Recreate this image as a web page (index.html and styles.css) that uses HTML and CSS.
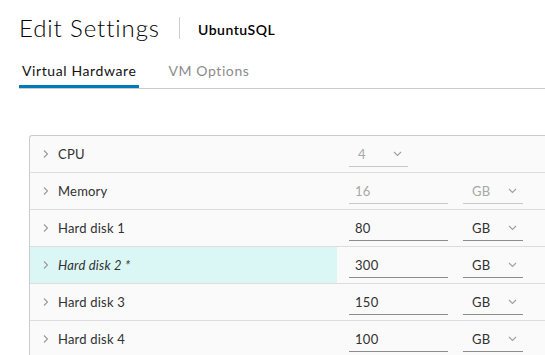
FILE: index.html
```html
<!DOCTYPE html>
<html lang="en">
<head>
    <meta charset="UTF-8" />
    <title>Edit Settings | UbuntuSQL</title>
    <link rel="stylesheet" href="styles.css">
</head>
<body>

    <header class="dialog-header">
        <h1>Edit Settings</h1>
        <span class="title-divider"></span>
        <span class="vm-name">UbuntuSQL</span>
    </header>

    <nav class="tabs">
        <a href="#" class="tab active">Virtual Hardware</a>
        <a href="#" class="tab">VM Options</a>
    </nav>

    <div class="hw-table">
        <div class="hw-row">
            <div class="hw-label">
                <svg class="caret" width="6" height="10" viewBox="0 0 6 10"><polyline points="1,1.5 4.5,5 1,8.5" /></svg>
                CPU
            </div>
            <div class="hw-value">
                <div class="field select short disabled">4
                    <svg class="select-caret" width="9" height="6" viewBox="0 0 9 6"><polyline points="1,1 4.5,4.5 8,1" /></svg>
                </div>
            </div>
        </div>

        <div class="hw-row">
            <div class="hw-label">
                <svg class="caret" width="6" height="10" viewBox="0 0 6 10"><polyline points="1,1.5 4.5,5 1,8.5" /></svg>
                Memory
            </div>
            <div class="hw-value">
                <div class="field input disabled">16</div>
                <div class="field select disabled">GB
                    <svg class="select-caret" width="9" height="6" viewBox="0 0 9 6"><polyline points="1,1 4.5,4.5 8,1" /></svg>
                </div>
            </div>
        </div>

        <div class="hw-row">
            <div class="hw-label">
                <svg class="caret" width="6" height="10" viewBox="0 0 6 10"><polyline points="1,1.5 4.5,5 1,8.5" /></svg>
                Hard disk 1
            </div>
            <div class="hw-value">
                <div class="field input">80</div>
                <div class="field select">GB
                    <svg class="select-caret" width="9" height="6" viewBox="0 0 9 6"><polyline points="1,1 4.5,4.5 8,1" /></svg>
                </div>
            </div>
        </div>

        <div class="hw-row modified">
            <div class="hw-label">
                <svg class="caret" width="6" height="10" viewBox="0 0 6 10"><polyline points="1,1.5 4.5,5 1,8.5" /></svg>
                <em>Hard disk 2 *</em>
            </div>
            <div class="hw-value">
                <div class="field input">300</div>
                <div class="field select">GB
                    <svg class="select-caret" width="9" height="6" viewBox="0 0 9 6"><polyline points="1,1 4.5,4.5 8,1" /></svg>
                </div>
            </div>
        </div>

        <div class="hw-row">
            <div class="hw-label">
                <svg class="caret" width="6" height="10" viewBox="0 0 6 10"><polyline points="1,1.5 4.5,5 1,8.5" /></svg>
                Hard disk 3
            </div>
            <div class="hw-value">
                <div class="field input">150</div>
                <div class="field select">GB
                    <svg class="select-caret" width="9" height="6" viewBox="0 0 9 6"><polyline points="1,1 4.5,4.5 8,1" /></svg>
                </div>
            </div>
        </div>

        <div class="hw-row">
            <div class="hw-label">
                <svg class="caret" width="6" height="10" viewBox="0 0 6 10"><polyline points="1,1.5 4.5,5 1,8.5" /></svg>
                Hard disk 4
            </div>
            <div class="hw-value">
                <div class="field input">100</div>
                <div class="field select">GB
                    <svg class="select-caret" width="9" height="6" viewBox="0 0 9 6"><polyline points="1,1 4.5,4.5 8,1" /></svg>
                </div>
            </div>
        </div>
    </div>

</body>
</html>
```

FILE: styles.css
```css
/* Clarity-like palette */
:root {
    --text-dark: #111111;
    --text-label: #313131;
    --text-muted: #8c8c8c;
    --text-disabled: #a8a8a8;
    --tab-blue: #0079b8;
    --line: #cccccc;
    --row-line: #dddddd;
    --row-bg: #fafafa;
    --row-modified: #daf7f6;
}

* {
    margin: 0;
    padding: 0;
    box-sizing: border-box;
}

html, body {
    background: #ffffff;
    color: var(--text-dark);
    font-family: Lato, "Noto Sans", sans-serif;
    overflow: hidden;
}

/* Title */
.dialog-header {
    display: flex;
    align-items: center;
    padding: 14px 0 0 19px;
}

.dialog-header h1 {
    font-size: 24px;
    font-weight: 300;
    line-height: 28px;
    letter-spacing: 0.9px;
    color: #000000;
}

.title-divider {
    width: 1px;
    height: 22px;
    background: var(--line);
    margin: 0 18px 0 19px;
}

.vm-name {
    font-size: 14px;
    font-weight: 600;
    letter-spacing: 0.5px;
    padding-top: 2px;
    color: #000000;
}

/* Tabs */
.tabs {
    display: flex;
    gap: 26px;
    margin: 19px 0 0 19px;
    border-bottom: 1px solid var(--line);
}

.tab {
    font-size: 14px;
    line-height: 20px;
    padding: 0 3px 4px;
    color: var(--text-muted);
    text-decoration: none;
    border-bottom: 3px solid transparent;
    letter-spacing: 0.6px;
}

.tab.active {
    color: var(--text-dark);
    border-bottom-color: var(--tab-blue);
}

/* Hardware table */
.hw-table {
    margin: 46px 0 0 29px;
    width: 540px;
    border-top: 1px solid var(--line);
    border-left: 1px solid var(--line);
    border-top-left-radius: 3px;
    background: var(--row-bg);
}

.hw-row {
    display: flex;
    height: 37px;
    border-bottom: 1px solid var(--row-line);
}

.hw-label {
    width: 307px;
    display: flex;
    align-items: center;
    gap: 9px;
    padding-left: 13px;
    font-size: 13px;
    color: var(--text-label);
    letter-spacing: 0.2px;
}

.hw-row.modified .hw-label {
    background: var(--row-modified);
}

.caret {
    fill: none;
    stroke: #9a9a9a;
    stroke-width: 1.1;
}

.hw-value {
    display: flex;
    align-items: flex-start;
    gap: 15px;
    padding: 6px 0 0 12px;
}

.field {
    height: 25px;
    display: flex;
    align-items: center;
    font-size: 13px;
    color: var(--text-label);
    border-bottom: 1px solid #8c8c8c;
    padding: 0 6px;
    letter-spacing: 0.3px;
}

.field.input {
    width: 99px;
}

.field.select {
    width: 60px;
    padding-left: 9px;
    justify-content: space-between;
    padding-right: 6px;
}

.field.select.short {
    width: 59px;
}

.field.disabled {
    color: var(--text-disabled);
    border-bottom-color: #c8c8c8;
}

.select-caret {
    fill: none;
    stroke: #a0a0a0;
    stroke-width: 1.1;
}
```
